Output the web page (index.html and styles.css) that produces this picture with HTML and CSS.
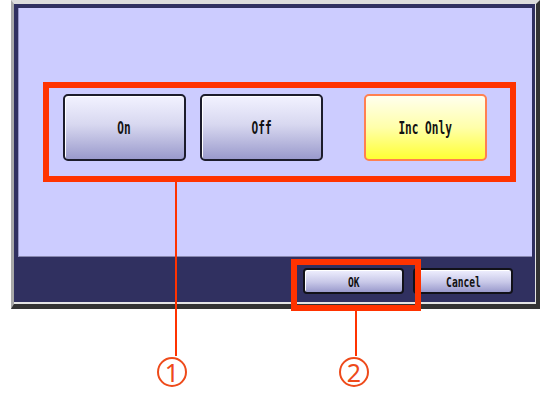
FILE: index.html
```html
<!DOCTYPE html>
<html lang="en">
<head>
  <meta charset="UTF-8">
  <meta name="viewport" content="width=device-width, initial-scale=1.0">
  <title>Mode Setting</title>
  <link rel="stylesheet" href="styles.css">
</head>
<body>
  <div class="device">
    <div class="frame">
      <div class="panel">
        <div class="choices">
          <button class="key"><span class="label">On</span></button>
          <button class="key"><span class="label">Off</span></button>
          <button class="key key-active"><span class="label">Inc Only</span></button>
        </div>
      </div>
      <div class="bar">
        <button class="key key-small"><span class="label">OK</span></button>
        <button class="key key-small"><span class="label">Cancel</span></button>
      </div>
    </div>
  </div>

  <!-- callouts -->
  <div class="mark mark-ok"></div>
  <div class="leader leader-1"></div>
  <div class="leader leader-2"></div>
  <div class="num num-1">1</div>
  <div class="num num-2">2</div>
</body>
</html>
```

FILE: styles.css
```css
body {
  margin: 0;
  padding: 0;
  background-color: #fff;
  font-family: "DejaVu Sans Mono", monospace;
  position: relative;
  height: 394px;
  overflow: hidden;
}

.device {
  margin-left: 11px;
  width: 529px;
  box-sizing: border-box;
  border-top: 4px solid #dcdcdc;
  border-left: 3px solid #a8a8a8;
  border-right: 4px solid #333333;
  border-bottom: 5px solid #333333;
}

.frame {
  background-color: #303060;
  padding: 4px 3px 0 4px;
  border-right: 1px solid #e4e4e4;
  border-bottom: 2px solid #e4e4e4;
}

.panel {
  height: 249px;
  box-sizing: border-box;
  background-color: #ccccff;
  border-left: 1px solid #9898c8;
  border-bottom: 1px solid #8888b0;
  padding-top: 74px;
  padding-left: 24px;
}

.choices {
  display: flex;
  gap: 14px;
  width: 473px;
  height: 100px;
  box-sizing: border-box;
  border: 6px solid #ff3300;
  padding: 6px 0 0 14px;
}

.key {
  display: flex;
  align-items: center;
  justify-content: center;
  width: 123px;
  height: 67px;
  margin: 0;
  padding: 0;
  border: 2px solid #1c1c2c;
  border-radius: 5px;
  background: linear-gradient(#f2f2ff, #d8d8f0 45%, #9a9acc);
  box-shadow: inset 1px 1px 0 #ffffff;
  color: #111;
  font-family: "DejaVu Sans Mono", monospace;
  font-size: 15px;
  font-weight: bold;
}

.key.key-active {
  margin-left: 27px;
  border-color: #ff8050;
  background: linear-gradient(#ffffee, #ffffaa 50%, #ffff33);
  box-shadow: none;
}

.label {
  display: inline-block;
  transform: scale(0.74, 1.12);
  white-space: nowrap;
}

.bar {
  height: 45px;
  box-sizing: border-box;
  display: flex;
  justify-content: flex-end;
  gap: 9px;
  padding: 11px 19px 0 0;
}

.key-small {
  width: 101px;
  height: 26px;
  border-radius: 4px;
  border-color: #111118;
  font-size: 13px;
  background: linear-gradient(#f0f0ff, #c8c8e8 55%, #9a9acc);
}

.key-small + .key-small {
  width: 100px;
}

.mark {
  position: absolute;
  box-sizing: border-box;
  border: 6px solid #ff3300;
}

.mark-ok {
  left: 291px;
  top: 259px;
  width: 130px;
  height: 52px;
}

.leader {
  position: absolute;
  width: 2px;
  background-color: #ff3300;
}

.leader-1 {
  left: 175px;
  top: 182px;
  height: 174px;
}

.leader-2 {
  left: 355px;
  top: 311px;
  height: 45px;
}

.num {
  position: absolute;
  top: 357px;
  width: 30px;
  height: 30px;
  box-sizing: border-box;
  border: 2px solid #ee4a1a;
  border-radius: 50%;
  color: #ee4a1a;
  font-family: "Noto Sans", sans-serif;
  font-size: 25px;
  line-height: 26px;
  text-align: center;
}

.num-1 {
  left: 157px;
}

.num-2 {
  left: 339px;
}
```
